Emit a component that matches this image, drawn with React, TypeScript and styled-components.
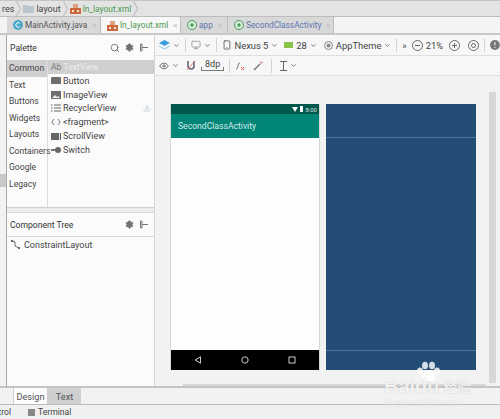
import React, { FC } from 'react';
import styled, { createGlobalStyle } from 'styled-components';
import { Settings, Search, Eye, Monitor, Smartphone, ChevronDown, Download } from 'lucide-react';

const GlobalStyle = createGlobalStyle`
  html, body { margin: 0; padding: 0; background: #f2f2f2; }
  body { font-family: Roboto, "Noto Sans", sans-serif; font-size: 9px; color: #3c3c3c; overflow: hidden; }
`;

const Page = styled.div`
  position: relative;
  width: 500px;
  height: 419px;
  overflow: hidden;
  display: grid;
  grid-template-rows: 17px 18px 1fr 19px 14px;
`;

const Crumbs = styled.div`
  display: flex;
  align-items: center;
  padding-left: 2px;
  gap: 2px;
  background: #e3e3e3;
  border-top: 1px solid #c4c4c4;
  border-bottom: 1px solid #bdbdbd;
  font-size: 9px;
`;

const CrumbText = styled.span<{ $green?: boolean }>`
  color: ${({ $green }) => ($green ? '#4c9a50' : '#444')};
  font-size: ${({ $green }) => ($green ? '8.4px' : '9px')};
`;

const TabBar = styled.div`
  display: flex;
  padding-left: 7px;
  background: #f4f4f4;
  border-bottom: 2px solid #c8c8c8;
`;

const FileTab = styled.div<{ $width: number; $active?: boolean; $color: string }>`
  width: ${({ $width }) => $width}px;
  background: ${({ $active }) => ($active ? '#f7f7f7' : '#d9d9d9')};
  border-right: 1px solid #bcbcbc;
  display: flex;
  align-items: center;
  gap: 2px;
  padding-left: 6px;
  box-sizing: border-box;
  font-size: 8.3px;
  color: ${({ $color }) => $color};
  white-space: nowrap;
  overflow: hidden;

  svg {
    flex: none;
  }
`;

const TabClose = styled.span`
  color: #bdbdbd;
  font-size: 8px;
  margin-left: 3px;
`;

const Main = styled.div`
  display: grid;
  grid-template-columns: 7px 148px 1fr;
  min-height: 0;
`;

const Gutter = styled.div`
  background: #f2f2f2;
  border-right: 1px solid #a8a8a8;
  display: flex;
  flex-direction: column;
  padding-top: 139px;
`;

const GutterMark = styled.div`
  width: 6px;
  height: 13px;
  background: #c9c9c9;
`;

const SidePanel = styled.div`
  background: #fbfbfb;
  border-right: 1px solid #d6d6d6;
  display: flex;
  flex-direction: column;
  min-height: 0;
`;

const PanelHeader = styled.div<{ $height: number }>`
  height: ${({ $height }) => $height}px;
  flex: none;
  display: flex;
  align-items: center;
  padding: 0 5px 0 3px;
  font-size: 8.6px;
  color: #333;
`;

const PanelTitle = styled.span`
  flex: 1;
`;

const PanelIcons = styled.div`
  display: flex;
  align-items: center;
  gap: 5px;
  color: #666;
`;

const PaletteBody = styled.div`
  display: grid;
  grid-template-columns: 41px 1fr;
  height: 147px;
  flex: none;
`;

const Categories = styled.div`
  border-right: 1px solid #dcdcdc;
  display: flex;
  flex-direction: column;
`;

const Category = styled.div<{ $active?: boolean }>`
  height: 16.5px;
  line-height: 16.5px;
  padding-left: 2px;
  font-size: 8.6px;
  white-space: nowrap;
  background: ${({ $active }) => ($active ? '#cfcfcf' : 'transparent')};
  color: #444;
`;

const Widgets = styled.div`
  display: flex;
  flex-direction: column;
`;

const SelectedWidget = styled.div`
  height: 14px;
  background: #cfcfcf;
  display: flex;
  align-items: center;
  padding-left: 3px;
  gap: 2px;
  font-size: 8.6px;
  color: #777;
`;

const SelectedLabel = styled.span`
  color: #eeeeee;
`;

const WidgetRow = styled.div`
  height: 13.8px;
  display: flex;
  align-items: center;
  padding-left: 3px;
  gap: 2px;
  font-size: 9px;
  color: #444;
  white-space: nowrap;
`;

const WidgetName = styled.span`
  flex: 1;
`;

const Splitter = styled.div`
  height: 6px;
  flex: none;
  background: #ececec;
  border-top: 1px solid #cfcfcf;
  border-bottom: 1px solid #d8d8d8;
  box-sizing: border-box;
`;

const TreeHeader = styled(PanelHeader)`
  border-bottom: 1px solid #d8d8d8;
`;

const TreeRow = styled.div`
  display: flex;
  align-items: center;
  gap: 3px;
  height: 15px;
  padding-left: 4px;
  font-size: 9px;
  color: #444;
`;

const Editor = styled.div`
  display: flex;
  flex-direction: column;
  min-height: 0;
  min-width: 0;
`;

const Toolbar = styled.div<{ $height: number }>`
  height: ${({ $height }) => $height}px;
  flex: none;
  display: flex;
  align-items: center;
  gap: 3px;
  padding-left: 4px;
  background: #f7f7f7;
  border-bottom: 1px solid #dedede;
  box-sizing: border-box;
  font-size: 9.4px;
  color: #444;
  white-space: nowrap;
`;

const Item = styled.span<{ $ml: number }>`
  display: flex;
  align-items: center;
  margin-left: ${({ $ml }) => $ml}px;
`;

const Sep = styled.span`
  width: 1px;
  height: 14px;
  background: #d4d4d4;
  margin: 0 2px;
`;

const Margin = styled.span`
  display: block;
  margin-left: 2px;
  padding: 0 4px 2px;
  line-height: 9px;
  font-size: 9px;
  background:
    linear-gradient(#777, #777) left bottom / 100% 1px no-repeat,
    linear-gradient(#777, #777) left bottom / 1px 4px no-repeat,
    linear-gradient(#777, #777) right bottom / 1px 4px no-repeat;
`;

const Canvas = styled.div`
  flex: 1;
  min-height: 0;
  display: grid;
  grid-template-columns: 1fr 11px;
  grid-template-rows: 1fr 10px;
  background: #f2f2f2;
`;

const Screens = styled.div`
  display: flex;
  gap: 6px;
  padding: 28px 0 0 15px;
`;

const Phone = styled.div`
  width: 150px;
  height: 266px;
  background: #fdfdfd;
  box-sizing: border-box;
  display: flex;
  flex-direction: column;
  border-right: 1px solid #d8d8d8;
  border-left: 1px solid #d8d8d8;
`;

const StatusBar = styled.div`
  height: 10px;
  flex: none;
  background: #00574b;
  display: flex;
  align-items: center;
  justify-content: flex-end;
  gap: 2px;
  padding-right: 2px;
  font-size: 6px;
  color: #d9e6e3;
`;

const AppBar = styled.div`
  height: 24px;
  flex: none;
  background: #008577;
  display: flex;
  align-items: center;
  padding-left: 7px;
  font-size: 8.6px;
  color: #d6ece8;
`;

const PhoneBody = styled.div`
  flex: 1;
`;

const NavBar = styled.div`
  height: 20px;
  flex: none;
  background: #000;
  display: flex;
  align-items: center;
  justify-content: space-around;
  padding: 0 4px;
`;

const Blueprint = styled.div`
  width: 150px;
  height: 266px;
  background: #234d74;
  display: flex;
  flex-direction: column;
`;

const BlueHead = styled.div`
  height: 33px;
  border-bottom: 1px solid #4d7496;
  flex: none;
`;

const BlueBody = styled.div`
  flex: 1;
`;

const BlueFoot = styled.div`
  height: 19px;
  flex: none;
  border-top: 1px solid #4d7496;
`;

const VScroll = styled.div`
  padding-top: 16px;
`;

const VThumb = styled.div`
  width: 7px;
  height: 291px;
  background: #d7d7d7;
`;

const HScroll = styled.div`
  padding: 1px 0 0 28px;
`;

const HThumb = styled.div`
  width: 303px;
  height: 6px;
  background: #d7d7d7;
`;

const DesignTabs = styled.div`
  display: flex;
  padding-left: 13px;
  background: #f2f2f2;
  border-top: 2px solid #c4c4c4;
  border-bottom: 1px solid #bdbdbd;
  font-size: 9.2px;
`;

const DesignTab = styled.div<{ $active?: boolean }>`
  width: 34px;
  display: flex;
  align-items: center;
  justify-content: center;
  box-sizing: border-box;
  background: ${({ $active }) => ($active ? '#fbfbfb' : '#cfcfcf')};
  border-left: 1px solid #cfcfcf;
  color: #555;
`;

const BottomBar = styled.div`
  display: flex;
  align-items: center;
  background: #f0f0f0;
  font-size: 8.6px;
  color: #444;
  white-space: nowrap;
`;

const BottomCut = styled.span`
  width: 11px;
  overflow: hidden;
  direction: rtl;
  margin-right: 17px;
`;

const TerminalItem = styled.span`
  display: flex;
  align-items: center;
  gap: 3px;
`;

const Watermark = styled.div`
  position: absolute;
  left: 384px;
  top: 361px;
  display: flex;
  flex-direction: column;
  align-items: flex-start;
  color: rgba(255, 255, 255, 0.82);
  text-shadow: 0 0 1px rgba(140, 140, 140, 0.5);
  pointer-events: none;
`;

const Paw = styled.svg`
  width: 28px;
  height: 25px;
  margin: 0 0 -10px 30px;
`;

const Brand = styled.div`
  display: flex;
  align-items: center;
  font-family: "Liberation Sans", sans-serif;
  font-size: 20px;
  font-weight: 700;
  line-height: 20px;
`;

const BrandCn = styled.span`
  font-family: "Noto Sans CJK SC", sans-serif;
  font-size: 14px;
  margin-left: 4px;
`;

const BrandUrl = styled.div`
  font-family: "Liberation Sans", sans-serif;
  font-size: 9.5px;
  opacity: 0.5;
  line-height: 10px;
  margin-top: 2px;
`;

const Chevron: FC = () => (
  <svg width="5" height="15" viewBox="0 0 5 15"><path d="M.5 0L4.500 7.500.5 15" fill="none" stroke="#b4b4b4" /></svg>
);

const Folder: FC = () => (
  <svg width="11" height="9" viewBox="0 0 11 9"><path d="M0 1h4l1 1h6v7H0z" fill="#b9c4cc" /></svg>
);

const XmlIcon: FC = () => (
  <svg width="11" height="11" viewBox="0 0 11 11">
    <rect x="0" y="5" width="11" height="6" fill="#c9683a" />
    <rect x="3" y="1" width="5" height="4" fill="#e0a080" />
    <rect x="2" y="7" width="2" height="2" fill="#f3e3d8" />
    <rect x="7" y="7" width="2" height="2" fill="#f3e3d8" />
  </svg>
);

const RoundIcon: FC<{ $color: string }> = ({ $color }) => (
  <svg width="10" height="10" viewBox="0 0 10 10">
    <circle cx="5" cy="5" r="4.500" fill="#d8ecd9" stroke={$color} />
    <circle cx="5" cy="5" r="1.700" fill={$color} />
  </svg>
);

const ClassIcon: FC = () => (
  <svg width="10" height="10" viewBox="0 0 10 10">
    <circle cx="5" cy="5" r="5" fill="#4aa8c8" />
    <path d="M6.800 3.400A2.300 2.300 0 1 0 6.800 6.600" fill="none" stroke="#fff" />
  </svg>
);

const Gear: FC = () => (
  <PanelIcons>
    <Settings size={9} fill="#777" strokeWidth={2} />
  </PanelIcons>
);

const PinIcon: FC = () => (
  <svg width="10" height="9" viewBox="0 0 10 9">
    <path d="M1.500 1v7M1.500 1h1.500v7H1.500M3 4.500h6" fill="none" stroke="#777" />
  </svg>
);

const Caret: FC = () => <ChevronDown size={7} strokeWidth={3} color="#666" />;

const ButtonGlyph: FC = () => <svg width="10" height="7" viewBox="0 0 10 7"><rect width="10" height="7" rx="1" fill="#6e6e6e" /></svg>;
const ImageGlyph: FC = () => (
  <svg width="10" height="8" viewBox="0 0 10 8"><rect width="10" height="8" fill="#6e6e6e" /><path d="M1 7l3-3 2 2 1-1 2 2z" fill="#eee" /></svg>
);
const RecyclerGlyph: FC = () => (
  <svg width="10" height="8" viewBox="0 0 10 8"><path d="M0 1h1.500M3 1h7M0 4h1.500M3 4h7M0 7h1.500M3 7h7" stroke="#666" /></svg>
);
const FragmentGlyph: FC = () => (
  <svg width="10" height="8" viewBox="0 0 10 8"><path d="M3 1L.8 4 3 7M7 1l2.200 3L7 7" fill="none" stroke="#777" /></svg>
);
const ScrollGlyph: FC = () => (
  <svg width="10" height="7" viewBox="0 0 10 7"><rect width="10" height="7" fill="#666" /><rect x="8" width="1" height="7" fill="#ddd" /></svg>
);
const SwitchGlyph: FC = () => (
  <svg width="10" height="6" viewBox="0 0 10 6"><path d="M0 3h4" stroke="#777" strokeWidth="2" /><circle cx="7" cy="3" r="3" fill="#666" /></svg>
);

const TreeGlyph: FC = () => (
  <svg width="10" height="9" viewBox="0 0 10 9"><path d="M1 1l3 1v4l4 2" fill="none" stroke="#666" /><rect x="0" y="0" width="2" height="2" fill="#666" /><rect x="7" y="7" width="2" height="2" fill="#666" /></svg>
);

const widgets: { name: string; glyph: React.ReactNode; download?: boolean }[] = [
  { name: 'Button', glyph: <ButtonGlyph /> },
  { name: 'ImageView', glyph: <ImageGlyph /> },
  { name: 'RecyclerView', glyph: <RecyclerGlyph />, download: true },
  { name: '<fragment>', glyph: <FragmentGlyph /> },
  { name: 'ScrollView', glyph: <ScrollGlyph /> },
  { name: 'Switch', glyph: <SwitchGlyph /> },
];

const categories = ['Common', 'Text', 'Buttons', 'Widgets', 'Layouts', 'Containers', 'Google', 'Legacy'];

const App: FC = () => (
  <Page>
    <GlobalStyle />
    <Crumbs>
      <CrumbText>res</CrumbText>
      <Chevron />
      <Folder />
      <CrumbText>layout</CrumbText>
      <Chevron />
      <XmlIcon />
      <CrumbText $green>ln_layout.xml</CrumbText>
      <Chevron />
    </Crumbs>

    <TabBar>
      <FileTab $width={94} $color="#555">
        <ClassIcon />
        MainActivity.java
        <TabClose>×</TabClose>
      </FileTab>
      <FileTab $width={80} $active $color="#4c9a50">
        <XmlIcon />
        ln_layout.xml
        <TabClose>×</TabClose>
      </FileTab>
      <FileTab $width={47} $color="#5b74b0">
        <RoundIcon $color="#4a9a5c" />
        app
        <TabClose>×</TabClose>
      </FileTab>
      <FileTab $width={106} $color="#5b74b0">
        <RoundIcon $color="#4a9a5c" />
        SecondClassActivity
        <TabClose>×</TabClose>
      </FileTab>
    </TabBar>

    <Main>
      <Gutter>
        <GutterMark />
      </Gutter>

      <SidePanel>
        <PanelHeader $height={25}>
          <PanelTitle>Palette</PanelTitle>
          <PanelIcons>
            <Search size={10} />
            <Gear />
            <PinIcon />
          </PanelIcons>
        </PanelHeader>
        <PaletteBody>
          <Categories>
            {categories.map((c, i) => (
              <Category key={c} $active={i === 0}>{c}</Category>
            ))}
          </Categories>
          <Widgets>
            <SelectedWidget>
              Ab <SelectedLabel>TextView</SelectedLabel>
            </SelectedWidget>
            {widgets.map(w => (
              <WidgetRow key={w.name}>
                {w.glyph}
                <WidgetName>{w.name}</WidgetName>
                {w.download && <Download size={8} color="#a9c0cc" style={{ marginRight: 3 }} />}
              </WidgetRow>
            ))}
          </Widgets>
        </PaletteBody>
        <Splitter />
        <TreeHeader $height={23}>
          <PanelTitle>Component Tree</PanelTitle>
          <PanelIcons>
            <Gear />
            <PinIcon />
          </PanelIcons>
        </TreeHeader>
        <TreeRow>
          <TreeGlyph />
          ConstraintLayout
        </TreeRow>
      </SidePanel>

      <Editor>
        <Toolbar $height={21}>
          <svg width="11" height="10" viewBox="0 0 11 10"><path d="M5.500 0L11 3 5.500 6 0 3z" fill="#3a9fdc" /><path d="M0 6l5.500 3L11 6" stroke="#8cc6e8" fill="none" /></svg>
          <Caret />
          <Sep />
          <Monitor size={10} color="#999" />
          <Caret />
          <Sep />
          <Smartphone size={10} color="#555" />
          Nexus 5
          <Caret />
          <Item $ml={3}>
            <svg width="9" height="6" viewBox="0 0 9 6"><rect width="9" height="6" fill="#8bc34a" /></svg>
          </Item>
          28
          <Caret />
          <Item $ml={4}>
            <svg width="9" height="9" viewBox="0 0 9 9"><circle cx="4.500" cy="4.500" r="4" fill="none" stroke="#888" /><circle cx="4.500" cy="4.500" r="2" fill="#888" /></svg>
          </Item>
          AppTheme
          <Caret />
          <Sep />
          <span>»</span>
          <Item $ml={2}>
            <svg width="11" height="11" viewBox="0 0 11 11"><circle cx="5.500" cy="5.500" r="5" fill="none" stroke="#666" /><path d="M3 5.500h5" stroke="#666" /></svg>
          </Item>
          21%
          <Item $ml={3}>
            <svg width="11" height="11" viewBox="0 0 11 11"><circle cx="5.500" cy="5.500" r="5" fill="none" stroke="#666" /><path d="M3 5.500h5M5.500 3v5" stroke="#666" /></svg>
          </Item>
          <Item $ml={5}>
            <svg width="11" height="11" viewBox="0 0 11 11"><circle cx="5.500" cy="5.500" r="5" fill="none" stroke="#666" /><circle cx="5.500" cy="5.500" r="2" fill="none" stroke="#666" /></svg>
          </Item>
          <Sep />
          <svg width="10" height="10" viewBox="0 0 10 10"><circle cx="5" cy="5" r="5" fill="#777" /><path d="M5 2v3.500M5 7v1" stroke="#fff" /></svg>
        </Toolbar>
        <Toolbar $height={20}>
          <Eye size={10} color="#666" />
          <Caret />
          <Item $ml={4}>
            <svg width="10" height="11" viewBox="0 0 10 11"><path d="M2 1v5a3 3 0 0 0 6 0V1" fill="none" stroke="#667" strokeWidth="1.600" /><path d="M1 10l8-9" stroke="#d77" /></svg>
          </Item>
          <Margin>8dp</Margin>
          <Sep />
          <svg width="11" height="10" viewBox="0 0 11 10"><path d="M1 8c3 0 1-6 4-6" fill="none" stroke="#777" /><path d="M6 6l3 3M9 6L6 9" stroke="#d66" /></svg>
          <Item $ml={4}>
            <svg width="10" height="10" viewBox="0 0 10 10"><path d="M1 9l6-6" stroke="#777" strokeWidth="1.500" /><path d="M8 0v3M7 1.500h3" stroke="#d9a" /></svg>
          </Item>
          <Item $ml={3}>
            <Sep />
          </Item>
          <Item $ml={3}>
            <svg width="7" height="10" viewBox="0 0 7 10"><path d="M0 .5h7M0 9.500h7M3.500 1v8" stroke="#666" /></svg>
          </Item>
          <Caret />
        </Toolbar>
        <Canvas>
          <Screens>
            <Phone>
              <StatusBar>
                <svg width="6" height="5" viewBox="0 0 6 5"><path d="M0 0h6L3 5z" fill="#fff" /></svg>
                <svg width="3" height="6" viewBox="0 0 3 6"><rect width="3" height="6" fill="#fff" /></svg>
                8:00
              </StatusBar>
              <AppBar>SecondClassActivity</AppBar>
              <PhoneBody />
              <NavBar>
                <svg width="8" height="8" viewBox="0 0 8 8"><path d="M6.500.8v6.400L1 4z" fill="none" stroke="#ccc" /></svg>
                <svg width="8" height="8" viewBox="0 0 8 8"><circle cx="4" cy="4" r="3.200" fill="none" stroke="#ccc" /></svg>
                <svg width="8" height="8" viewBox="0 0 8 8"><rect x="1" y="1" width="6" height="6" fill="none" stroke="#ccc" /></svg>
              </NavBar>
            </Phone>
            <Blueprint>
              <BlueHead />
              <BlueBody />
              <BlueFoot />
            </Blueprint>
          </Screens>
          <VScroll>
            <VThumb />
          </VScroll>
          <HScroll>
            <HThumb />
          </HScroll>
        </Canvas>
      </Editor>
    </Main>

    <DesignTabs>
      <DesignTab $active>Design</DesignTab>
      <DesignTab>Text</DesignTab>
    </DesignTabs>

    <BottomBar>
      <BottomCut>Control</BottomCut>
      <TerminalItem>
        <svg width="7" height="7" viewBox="0 0 7 7"><rect width="7" height="7" fill="#888" /></svg>
        Terminal
      </TerminalItem>
    </BottomBar>

    <Watermark>
      <Paw viewBox="0 0 28 25">
        <g fill="currentColor">
          <ellipse cx="6" cy="10" rx="3" ry="3.500" />
          <ellipse cx="11" cy="4.500" rx="3" ry="3.800" />
          <ellipse cx="18" cy="4.500" rx="3" ry="3.800" />
          <ellipse cx="23" cy="10" rx="3" ry="3.500" />
          <path d="M14.500 9c4 0 8 6 6 10-1.500 3-4 1-6 1s-5 2-6.500-1C6 15 10.500 9 14.500 9z" />
        </g>
      </Paw>
      <Brand>
        Baidu
        <BrandCn>经验</BrandCn>
      </Brand>
      <BrandUrl>jingyan.baidu.com</BrandUrl>
    </Watermark>
  </Page>
);

export default App;
